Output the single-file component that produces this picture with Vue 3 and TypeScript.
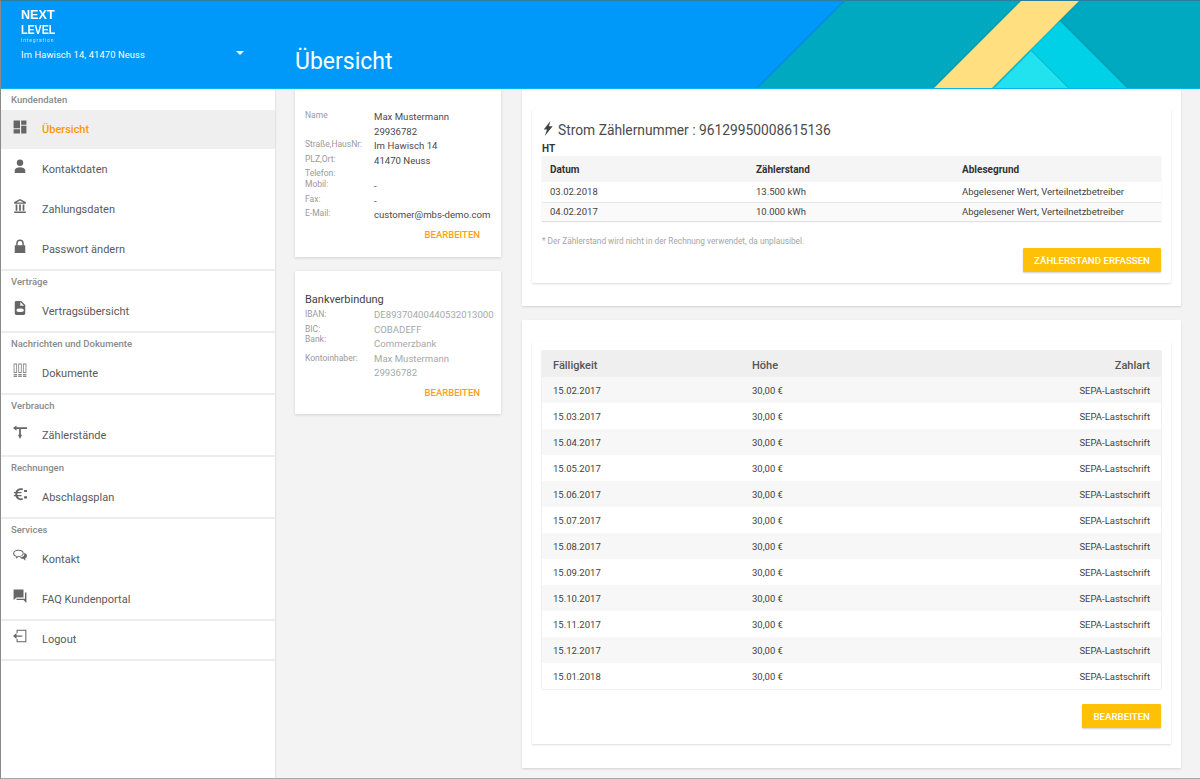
<template>
  <div class="page">
    <header class="topbar">
      <!-- decorative shapes in the header corner -->
      <svg class="deco" viewBox="0 0 1200 87" preserveAspectRatio="none">
        <polygon class="shade" points="845,0 1200,0 1200,87 758,87" fill="#00a9c0" />
        <polygon class="shade" points="1060,20 1127,87 970,87" fill="#00d1e6" />
        <polygon class="shade" points="1031,50 1068,87 994,87" fill="#22e2f0" />
        <polygon class="shade" points="1021,0 1079,0 992,87 934,87" fill="#ffdf80" />
      </svg>
      <div class="brand">
        <div class="logo">
          <div class="logo-line next">NEXT</div>
          <div class="logo-line level">LEVEL</div>
          <div class="logo-sub">Integration</div>
        </div>
        <div class="address">
          <span>Im Hawisch 14, 41470 Neuss</span>
          <span class="caret"></span>
        </div>
      </div>
      <h1 class="title">Übersicht</h1>
    </header>

    <div class="body">
      <nav class="sidebar">
        <section v-for="group in groups" :key="group.label" class="group">
          <div v-if="group.label" class="group-label">{{ group.label }}</div>
          <a
            v-for="item in group.items"
            :key="item.text"
            class="nav-item"
            :class="{ active: item.text === 'Übersicht' }"
          >
            <svg class="nav-icon" viewBox="0 0 24 24" v-html="icons[item.icon]"></svg>
            <span>{{ item.text }}</span>
          </a>
        </section>
      </nav>

      <main class="content">
        <div class="col-left">
          <div class="card small first">
            <dl class="facts">
              <template v-for="row in contact" :key="row.label">
                <dt>{{ row.label }}</dt>
                <dd>{{ row.value }}<template v-if="row.extra"><br />{{ row.extra }}</template></dd>
              </template>
            </dl>
            <div class="link">BEARBEITEN</div>
          </div>
          <div class="card small">
            <h3>Bankverbindung</h3>
            <dl class="facts muted">
              <template v-for="row in bank" :key="row.label">
                <dt>{{ row.label }}</dt>
                <dd>{{ row.value }}<template v-if="row.extra"><br />{{ row.extra }}</template></dd>
              </template>
            </dl>
            <div class="link">BEARBEITEN</div>
          </div>
        </div>

        <div class="col-right">
          <div class="panel first">
            <div class="inner meter">
              <h2>
                <svg class="bolt" viewBox="0 0 10 16"><path d="M7.500 0 .5 9H4L1.500 16 10 5.500H6z" /></svg>
                Strom Zählernummer : 96129950008615136
              </h2>
              <div class="ht">HT</div>
              <table class="readings">
                <thead>
                  <tr><th class="c1">Datum</th><th class="c2">Zählerstand</th><th>Ablesegrund</th></tr>
                </thead>
                <tbody>
                  <tr v-for="r in readings" :key="r.date">
                    <td>{{ r.date }}</td><td>{{ r.value }}</td><td>Abgelesener Wert, Verteilnetzbetreiber</td>
                  </tr>
                </tbody>
              </table>
              <p class="note">* Der Zählerstand wird nicht in der Rechnung verwendet, da unplausibel.</p>
              <div class="actions"><button class="btn">ZÄHLERSTAND ERFASSEN</button></div>
            </div>
          </div>

          <div class="panel second">
            <div class="inner plan">
              <table class="payments">
                <thead>
                  <tr><th class="p1">Fälligkeit</th><th class="p2">Höhe</th><th class="right">Zahlart</th></tr>
                </thead>
                <tbody>
                  <tr v-for="due in dueDates" :key="due">
                    <td>{{ due }}</td><td>30,00 €</td><td class="right">SEPA-Lastschrift</td>
                  </tr>
                </tbody>
              </table>
              <div class="actions"><button class="btn">BEARBEITEN</button></div>
            </div>
          </div>
        </div>
      </main>
    </div>
  </div>
</template>

<script setup lang="ts">
interface NavItem {
  text: string
  icon: string
}

interface NavGroup {
  label: string
  items: NavItem[]
}

interface Fact {
  label: string
  value: string
  extra?: string
}

const icons: Record<string, string> = {
  quilt: '<path d="M1 1h11v13H1zM1 16h11v7H1zM14 1h9v7h-9zM14 10h9v13h-9z"/>',
  person: '<circle cx="12" cy="6.500" r="5.500"/><path d="M3 24v-4c0-2 1.500-3.500 3-4.500 2-1 4-1.500 6-1.500s4 .5 6 1.500c1.500 1 3 2.500 3 4.500v4z"/>',
  bank: '<path fill-rule="evenodd" d="M12 0 2 5v3h20V5zm0 2.500L18 6H6z"/><path d="M2 21.500h20V24H2zM4.500 9.500h3V20h-3zM10.500 9.500h3V20h-3zM16.500 9.500h3V20h-3z"/>',
  lock: '<path fill-rule="evenodd" d="M5.500 10.500V7.500a6.500 6.500 0 0 1 13 0v3H21V24H3V10.500zm2.500 0h8v-3a4 4 0 0 0-8 0z"/>',
  contract: '<path fill-rule="evenodd" d="M3 2.500A2.500 2.500 0 0 1 5.500 0H14l7 7v14.500a2.500 2.500 0 0 1-2.500 2.500h-13A2.500 2.500 0 0 1 3 21.500zM12.500 1.500v6.500H19zM10 13c-2.500 0-4 1.300-4 3s1.500 3 4 3h4.500c2.500 0 4-1.300 4-3s-1.500-3-4-3z"/>',
  docs: '<path fill="#8a8a8a" fill-rule="evenodd" d="M1 1h6v16H1zm1.500 1.500v13h3v-13zM9 1h6v16H9zm1.500 1.500v13h3v-13zM17 1h6v16h-6zm1.500 1.500v13h3v-13zM1 19h6v2H1zM1 22h6v2H1zM9 19h6v2H9zM9 22h6v2H9zM17 19h6v2h-6zM17 22h6v2h-6z"/>',
  meter: '<path d="M0 5 6 1v3h18v3H6v3zM10.500 7h3v10h-3zM8.500 16.500h7L12 24z"/>',
  euro: '<path d="M13.500 22.500c-4.500 0-8-2.500-9.200-6.500H1.500v-2.300H4a11 11 0 0 1 0-3H1.500V8.400h2.800C5.500 4.400 9 2 13.500 2c1.300 0 2.500.2 3.500.6l-.7 3A7 7 0 0 0 13.500 5c-2.600 0-4.500 1.300-5.400 3.400h6.400v2.300H7.600a8 8 0 0 0 0 3h6.900V16H8.100c.9 2.100 2.800 3.500 5.400 3.500 1 0 2-.2 2.800-.6l.7 3a11 11 0 0 1-3.500.6z"/><path d="M19 5h5v3.500h-5zM19 16h5v3.500h-5z"/>',
  chat: '<path fill="none" stroke="currentColor" stroke-width="1.800" d="M9.500 2C5 2 1 4.300 1 7.500c0 2.200 1.700 3.800 4 4.700l1.500 2.800 2-2.200c4.500 0 9-2 9-5.300S14 2 9.500 2z"/><path d="M19 6.500c3 1 5 2.700 5 5 0 2-1.300 3.400-3 4.300l.5 4.200-4-3.300c-2.500 0-4.800-.8-6-2.200 5 0 9.500-3 7.500-8z"/>',
  forum: '<path d="M1 1h17v13.500H6L1 19zM20.500 6H23v18l-5-5H6v-2.500h14.500z"/>',
  logout: '<path fill="none" stroke="currentColor" stroke-width="1.800" d="M7 7V2h15v20H7v-5"/><path d="M0 12l6-5v4h10v2.200H6V17z"/>'
}

const groups: NavGroup[] = [
  {
    label: 'Kundendaten',
    items: [
      { text: 'Übersicht', icon: 'quilt' },
      { text: 'Kontaktdaten', icon: 'person' },
      { text: 'Zahlungsdaten', icon: 'bank' },
      { text: 'Passwort ändern', icon: 'lock' }
    ]
  },
  { label: 'Verträge', items: [{ text: 'Vertragsübersicht', icon: 'contract' }] },
  { label: 'Nachrichten und Dokumente', items: [{ text: 'Dokumente', icon: 'docs' }] },
  { label: 'Verbrauch', items: [{ text: 'Zählerstände', icon: 'meter' }] },
  { label: 'Rechnungen', items: [{ text: 'Abschlagsplan', icon: 'euro' }] },
  {
    label: 'Services',
    items: [
      { text: 'Kontakt', icon: 'chat' },
      { text: 'FAQ Kundenportal', icon: 'forum' }
    ]
  },
  { label: '', items: [{ text: 'Logout', icon: 'logout' }] }
]

const contact: Fact[] = [
  { label: 'Name', value: 'Max Mustermann', extra: '29936782' },
  { label: 'Straße,HausNr:', value: 'Im Hawisch 14' },
  { label: 'PLZ,Ort:', value: '41470 Neuss' },
  { label: 'Telefon:', value: '' },
  { label: 'Mobil:', value: '-' },
  { label: 'Fax:', value: '-' },
  { label: 'E-Mail:', value: 'customer@mbs-demo.com' }
]

const bank: Fact[] = [
  { label: 'IBAN:', value: 'DE89370400440532013000' },
  { label: 'BIC:', value: 'COBADEFF' },
  { label: 'Bank:', value: 'Commerzbank' },
  { label: 'Kontoinhaber:', value: 'Max Mustermann', extra: '29936782' }
]

const readings = [
  { date: '03.02.2018', value: '13.500 kWh' },
  { date: '04.02.2017', value: '10.000 kWh' }
]

const dueDates = [
  '15.02.2017', '15.03.2017', '15.04.2017', '15.05.2017', '15.06.2017', '15.07.2017',
  '15.08.2017', '15.09.2017', '15.10.2017', '15.11.2017', '15.12.2017', '15.01.2018'
]
</script>

<style>
html,
body {
  margin: 0;
  background: #f3f3f3;
}
</style>

<style scoped>
.page {
  box-sizing: border-box;
  width: 1200px;
  height: 779px;
  display: flex;
  flex-direction: column;
  overflow: hidden;
  border-top: 1px solid #2b7f9c;
  border-bottom: 1px solid #a8a8a8;
  border-left: 1px solid #8a8a8a;
  background: #f3f3f3;
  font-family: Roboto, "Liberation Sans", sans-serif;
  color: #424242;
}

.topbar {
  position: relative;
  flex: none;
  height: 87px;
  display: flex;
  box-sizing: border-box;
  background: #0098f9;
  color: #fff;
  overflow: hidden;
}

.deco {
  position: absolute;
  left: -1px;
  top: 0;
  width: 1200px;
  height: 87px;
}

.shade {
  filter: drop-shadow(0 0 1px rgba(0, 0, 0, 0.25));
}

.brand {
  position: relative;
  width: 274px;
  padding: 6px 0 0 20px;
  box-sizing: border-box;
}

.logo-line {
  width: 60px;
  font-family: "Liberation Sans", sans-serif;
  font-weight: 700;
  font-size: 13px;
  line-height: 15px;
  transform-origin: left;
}

.next {
  transform: scaleX(0.97);
}

.level {
  transform: scaleX(0.82);
}

.logo-sub {
  font-size: 5px;
  line-height: 6px;
  letter-spacing: 0.850px;
  opacity: 0.75;
}

.address {
  display: flex;
  justify-content: space-between;
  align-items: center;
  margin-top: 5px;
  padding-right: 31px;
  font-size: 9.400px;
  line-height: 14px;
  letter-spacing: 0.100px;
}

.caret {
  width: 0;
  height: 0;
  margin-top: -5px;
  border-left: 4px solid transparent;
  border-right: 4px solid transparent;
  border-top: 4px solid #fff;
}

.title {
  position: relative;
  margin: 46px 0 0 20px;
  font-size: 23px;
  line-height: 30px;
  font-weight: 400;
}

.body {
  flex: 1;
  display: flex;
  min-height: 0;
  border-top: 1px solid #07b4ee;
}

.sidebar {
  flex: none;
  width: 274px;
  background: #fff;
  box-shadow: 1px 0 1px rgba(0, 0, 0, 0.06);
}

.group {
  border-bottom: 2px solid #ededed;
}

.group:first-child .group-label {
  height: 21px;
}

.group:last-child {
  margin-top: -2px;
}

.group-label {
  box-sizing: border-box;
  height: 20px;
  padding: 1px 0 0 10px;
  font-size: 9.500px;
  line-height: 20px;
  font-weight: 500;
  color: #8a8a8a;
}

.nav-item {
  height: 40px;
  display: flex;
  align-items: center;
  font-size: 11px;
  color: #5a5a5a;
}

.nav-item.active {
  height: 39px;
  background: #efefef;
  color: #ff9800;
  font-weight: 500;
}

.nav-icon {
  flex: none;
  width: 14px;
  height: 14px;
  margin: -6px 15px 0 12px;
  fill: #666;
  color: #666;
}

.content {
  flex: 1;
  display: flex;
  align-items: flex-start;
  min-width: 0;
}

.col-left {
  flex: none;
  width: 206px;
  margin-left: 20px;
}

.card {
  background: #fff;
  box-shadow: 0 1px 3px rgba(0, 0, 0, 0.14);
}

.card.small {
  margin-bottom: 14px;
  padding: 14px 10px 0;
  height: 143px;
  box-sizing: border-box;
}

.card.small.first {
  height: 168px;
  padding-top: 21px;
}

.card h3 {
  margin: 8px 0 1px;
  font-size: 11px;
  line-height: 14px;
  font-weight: 400;
  color: #424242;
}

.facts {
  display: grid;
  grid-template-columns: 69px 1fr;
  margin: 0;
}

.facts dt {
  font-size: 8.500px;
  line-height: 12px;
  margin-top: -1px;
  color: #9a9a9a;
}

.facts dd {
  margin: 0;
  font-size: 9.600px;
  line-height: 14.500px;
  white-space: nowrap;
  color: #4a4a4a;
}

.facts.muted dd {
  color: #a8a8a8;
}

.facts.muted dt {
  margin-top: 0;
}

.facts.muted dt:nth-of-type(3) {
  margin-top: -4px;
}

.link {
  margin-top: 5px;
  padding-right: 11px;
  text-align: right;
  font-size: 9.500px;
  line-height: 14px;
  font-weight: 500;
  color: #ff9f0f;
}

.col-right {
  flex: none;
  width: 659px;
  margin-left: 21px;
}

.panel {
  margin-bottom: 14px;
  padding: 20px 10px 24px;
  background: #fff;
  box-shadow: 0 1px 2px rgba(0, 0, 0, 0.14);
}

.panel.first {
  padding-bottom: 23px;
}

.panel.second {
  padding-top: 22px;
}

.inner {
  box-sizing: border-box;
  padding: 0 10px;
  background: #fff;
  box-shadow: 0 1px 2px rgba(0, 0, 0, 0.14);
}

.meter {
  height: 174px;
  padding-top: 12px;
}

.meter h2 {
  display: flex;
  align-items: center;
  gap: 5px;
  margin: 0 0 0 1px;
  font-size: 13.800px;
  line-height: 18px;
  font-weight: 400;
  color: #4a4a4a;
}

.bolt {
  flex: none;
  width: 10px;
  height: 15px;
  fill: #424242;
  margin-top: -4px;
}

.ht {
  font-size: 10px;
  line-height: 14px;
  margin-top: 3px;
  font-weight: 700;
  color: #333;
}

table {
  width: 100%;
  border-collapse: collapse;
  table-layout: fixed;
  font-size: 9.500px;
  color: #424242;
}

th {
  box-sizing: border-box;
  text-align: left;
  font-weight: 700;
}

.readings {
  box-shadow: 0 1px 1px rgba(0, 0, 0, 0.12);
}

.readings thead tr {
  background: #f5f5f5;
  height: 26px;
  font-size: 10px;
  color: #333;
}

.readings tbody tr {
  height: 20px;
}

.readings tbody tr + tr {
  height: 19px;
  background: #fafafa;
  border-top: 1px solid #e6e6e6;
}

.readings th,
.readings td {
  padding: 0 0 0 8px;
}

.readings .c1,
.readings .c2 {
  width: 206px;
}

.note {
  margin: 14px 0 0;
  font-size: 8.250px;
  line-height: 12px;
  color: #a5a5a5;
}

.actions {
  display: flex;
  justify-content: flex-end;
}

.btn {
  height: 24px;
  padding: 0 11px;
  border: none;
  border-radius: 1px;
  background: #ffc107;
  color: #fff;
  font-family: inherit;
  font-size: 9.700px;
  font-weight: 500;
  box-shadow: 0 1px 2px rgba(0, 0, 0, 0.2);
}

.meter .actions {
  margin-top: 1px;
}

.plan {
  height: 402px;
  padding-top: 9px;
}

.payments {
  box-shadow: 0 0 1px rgba(0, 0, 0, 0.35);
}

.payments thead tr {
  background: #efefef;
  height: 26px;
  font-size: 11px;
  color: #555;
}

.payments th {
  padding-top: 3px;
  padding-bottom: 0;
  font-weight: 500;
}

.payments tbody tr {
  height: 26px;
}

.payments tbody tr:nth-child(odd) {
  background: #f7f7f7;
}

.payments th,
.payments td {
  padding-left: 11px;
  padding-right: 11px;
}

.payments .p1,
.payments .p2 {
  width: 199px;
}

.right {
  text-align: right;
}

th.right {
  text-align: right;
}

.plan .actions {
  margin-top: 15px;
}
</style>
